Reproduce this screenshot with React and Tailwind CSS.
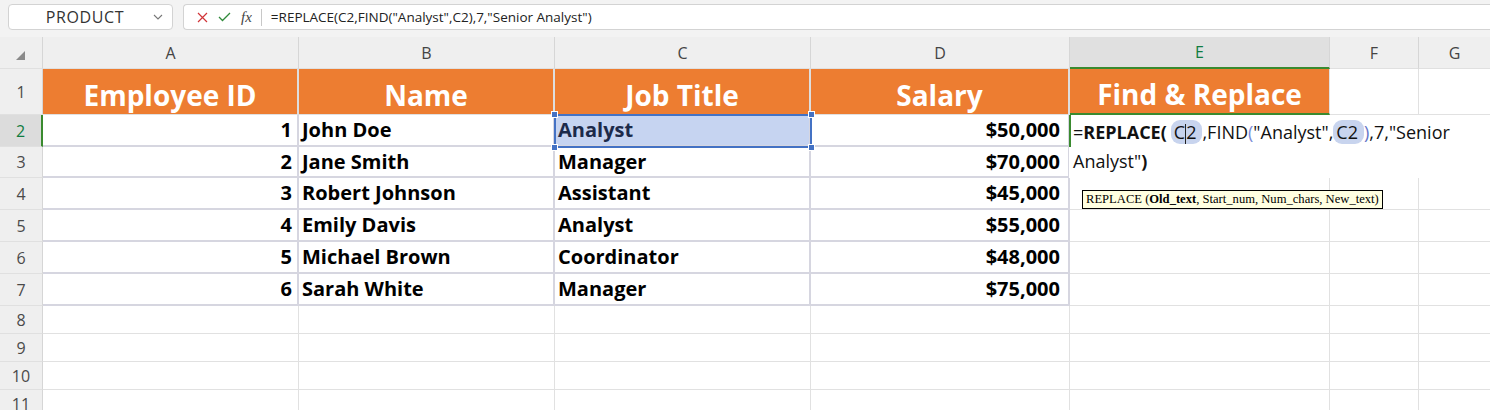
import React from "react";

const W = ["w-[43px]", "w-[256px]", "w-[256px]", "w-[256px]", "w-[259px]", "w-[260px]", "w-[89px]", "w-[71px]"];

const data = [
  ["1", "John Doe", "Analyst", "$50,000"],
  ["2", "Jane Smith", "Manager", "$70,000"],
  ["3", "Robert Johnson", "Assistant", "$45,000"],
  ["4", "Emily Davis", "Analyst", "$55,000"],
  ["5", "Michael Brown", "Coordinator", "$48,000"],
  ["6", "Sarah White", "Manager", "$75,000"],
];
const rowH = ["h-[32px]", "h-[31px]", "h-[32px]", "h-[32px]", "h-[32px]", "h-[32px]"];

function RowHead({ n, active }) {
  return (
    <div
      className={
        "shrink-0 w-[43px] flex items-center justify-center text-[16px] border-b border-[#e0e0e0] " +
        (active
          ? "bg-[#dcdcdc] text-[#107c41] border-r-2 border-r-[#3a8a2f]"
          : "bg-[#efefef] text-[#4a4a4a] border-r border-r-[#d6d6d6]")
      }
    >
      {n}
    </div>
  );
}

function Blank({ w, extra = "" }) {
  return <div className={"shrink-0 border-r border-b border-[#e1e1e1] bg-white " + w + " " + extra} />;
}

export default function App() {
  return (
    <div className="relative w-[1490px] h-[410px] overflow-hidden bg-white font-['Open_Sans',sans-serif] text-black">
      {/* Formula bar */}
      <div className="h-[37px] bg-[#f3f3f3] flex items-start pt-[4px] pl-[8px] gap-[10px]">
        <div className="w-[165px] h-[26px] bg-white border border-[#d3d3d3] rounded-[4px] flex items-center">
          <span className="flex-1 text-center text-[16px] text-[#333] tracking-[0.6px] pl-[8px]">PRODUCT</span>
          <svg width="10" height="6" viewBox="0 0 10 6" className="mr-[9px]">
            <path d="M1 1 L5 5 L9 1" fill="none" stroke="#777" strokeWidth="1.1" />
          </svg>
        </div>
        <div className="flex-1 h-[26px] bg-white border border-[#d3d3d3] rounded-l-[4px] border-r-0 flex items-center">
          <svg width="11" height="11" viewBox="0 0 11 11" className="ml-[13px]">
            <path d="M1 1 L10 10 M10 1 L1 10" stroke="#d13438" strokeWidth="1.2" />
          </svg>
          <svg width="13" height="10" viewBox="0 0 13 10" className="ml-[10px]">
            <path d="M1 5 L4.5 8.5 L12 1" fill="none" stroke="#2f8a3a" strokeWidth="1.3" />
          </svg>
          <span className="ml-[10px] font-['Liberation_Serif',serif] italic text-[15px] text-[#444] leading-none">fx</span>
          <div className="ml-[9px] w-px h-[17px] bg-[#c8c8c8]" />
          <span className="ml-[9px] text-[13.5px] text-[#222]">=REPLACE(C2,FIND("Analyst",C2),7,"Senior Analyst")</span>
        </div>
      </div>

      {/* Column header row */}
      <div className="flex h-[32px] bg-[#efefef]">
        <div className="shrink-0 w-[43px] flex items-end justify-end pb-[8px] pr-[17px] border-r border-[#d6d6d6] border-b border-b-[#e0e0e0]">
          <svg width="9" height="9" viewBox="0 0 9 9">
            <path d="M9 0 L9 9 L0 9 Z" fill="#8a8a8a" />
          </svg>
        </div>
        {["A", "B", "C", "D"].map((l, i) => (
          <div
            key={l}
            className={"shrink-0 " + W[i + 1] + " flex items-center justify-center text-[16px] text-[#444] border-r border-[#d6d6d6] border-b border-b-[#e0e0e0]"}
          >
            {l}
          </div>
        ))}
        <div className="shrink-0 w-[260px] flex items-center justify-center text-[16px] text-[#107c41] bg-[#e0e0e0] border-r border-[#d6d6d6] border-b-2 border-b-[#3a8a2f]">
          E
        </div>
        <div className="shrink-0 w-[89px] flex items-center justify-center text-[16px] text-[#444] border-r border-[#d6d6d6] border-b border-b-[#e0e0e0]">
          F
        </div>
        <div className="shrink-0 w-[71px] flex items-center justify-center text-[16px] text-[#444] border-b border-b-[#e0e0e0]">
          G
        </div>
      </div>

      {/* Row 1 */}
      <div className="flex h-[46px]">
        <RowHead n="1" />
        {["Employee ID", "Name", "Job Title", "Salary"].map((t, i) => (
          <div
            key={t}
            className={"shrink-0 " + W[i + 1] + " bg-[#ed7d31] text-white font-bold text-[28px] flex items-center justify-center pt-[6px] border-r-2 border-[#dedede] border-b border-b-[#e0e0e0]"}
          >
            {t}
          </div>
        ))}
        <div className="shrink-0 w-[260px] bg-[#ed7d31] text-white font-bold text-[28px] flex items-center justify-center pt-[6px] border-b-2 border-b-[#3a8a2f] border-r border-r-[#e1e1e1]">
          Find &amp; Replace
        </div>
        <Blank w="w-[89px]" />
        <Blank w="w-[71px]" extra="border-r-0" />
      </div>

      {/* Data rows */}
      {data.map((r, idx) => (
        <div key={idx} className={"flex " + rowH[idx]}>
          <RowHead n={String(idx + 2)} active={idx === 0} />
          <div className="shrink-0 w-[256px] flex items-center justify-end pr-[5px] font-bold text-[20px] border-r-2 border-b-2 border-[#d6d6e0]">
            {r[0]}
          </div>
          <div className="shrink-0 w-[256px] flex items-center pl-[3px] font-bold text-[20px] border-r-2 border-b-2 border-[#d6d6e0]">
            {r[1]}
          </div>
          <div
            className={
              "shrink-0 w-[256px] flex items-center pl-[3px] font-bold text-[20px] border-r-2 border-b-2 border-[#d6d6e0] " +
              (idx === 0 ? "bg-[#c6d4f1] text-[#1c2a4a]" : "")
            }
          >
            {r[2]}
          </div>
          <div className="shrink-0 w-[259px] flex items-center justify-end pr-[8px] font-bold text-[20px] border-r-2 border-b-2 border-[#d6d6e0]">
            {r[3]}
          </div>
          <Blank w="w-[260px]" />
          <Blank w="w-[89px]" />
          <Blank w="w-[71px]" extra="border-r-0" />
        </div>
      ))}

      {/* Empty rows */}
      {["8", "9", "10", "11"].map((n) => (
        <div key={n} className="flex h-[28px]">
          <RowHead n={n} />
          <Blank w="w-[256px]" />
          <Blank w="w-[256px]" />
          <Blank w="w-[256px]" />
          <Blank w="w-[259px]" />
          <Blank w="w-[260px]" />
          <Blank w="w-[89px]" />
          <Blank w="w-[71px]" extra="border-r-0" />
        </div>
      ))}

      {/* Selection on C2 */}
      <div className="absolute left-[554px] top-[114px] w-[258px] h-[34px] border-2 border-[#4472c4] pointer-events-none">
        <div className="absolute -left-[5px] -top-[5px] w-[7px] h-[7px] bg-[#4472c4] border border-white" />
        <div className="absolute -right-[5px] -top-[5px] w-[7px] h-[7px] bg-[#4472c4] border border-white" />
        <div className="absolute -left-[5px] -bottom-[5px] w-[7px] h-[7px] bg-[#4472c4] border border-white" />
        <div className="absolute -right-[5px] -bottom-[5px] w-[7px] h-[7px] bg-[#4472c4] border border-white" />
      </div>

      {/* In-cell editor on E2 */}
      <div className="absolute left-[1069px] top-[115px] w-[421px] h-[63px] bg-white">
        <div className="absolute left-0 top-0 w-[2px] h-[32px] bg-[#3a8a2f]" />
        <div className="pl-[4px] pt-[3px] text-[18px] leading-[29px] text-[#111] whitespace-nowrap">
          <div>
            =<b>REPLACE(</b>
            <span className="relative inline-block ml-[4px] pl-[3px] pr-[6px] bg-[#c8d4ee] rounded-[9px] leading-[24px]">
              C<span className="inline-block w-px h-[20px] bg-[#222] align-middle" />2
            </span>
            ,FIND<span className="text-[#7b8bd6]">(</span>"Analyst",
            <span className="inline-block pl-[3px] pr-[6px] bg-[#c8d4ee] rounded-[9px] leading-[24px]">C2</span>
            <span className="text-[#6474c8]">)</span>,7,"Senior
          </div>
          <div>
            Analyst"<b>)</b>
          </div>
        </div>
      </div>

      {/* Function tooltip */}
      <div className="absolute left-[1082px] top-[190px] h-[19px] bg-[#ffffe1] border border-black px-[3px] font-['Liberation_Serif',serif] text-[12.6px] leading-[17px] text-black whitespace-nowrap">
        REPLACE (<b>Old_text</b>, Start_num, Num_chars, New_text)
      </div>
    </div>
  );
}
